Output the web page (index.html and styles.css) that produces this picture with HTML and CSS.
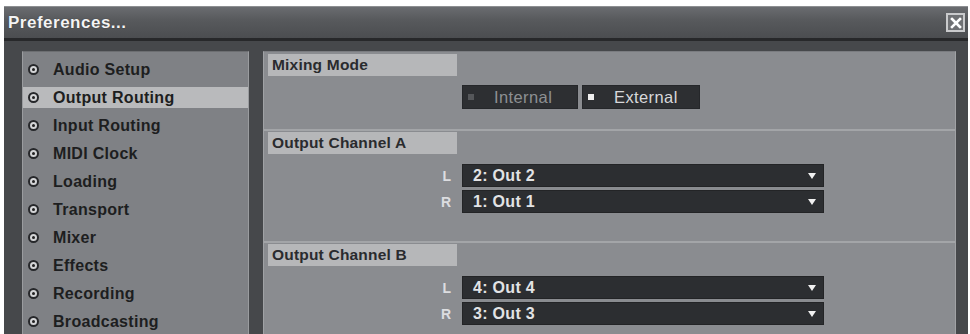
FILE: index.html
```html
<!DOCTYPE html>
<html>
<head>
<meta charset="utf-8">
<link rel="stylesheet" href="styles.css">
</head>
<body>
<div class="window">
  <div class="titlebar">
    <span class="title">Preferences...</span>
    <span class="close">
      <svg width="14" height="14" viewBox="0 0 14 14"><path d="M3 3 L11 11 M11 3 L3 11" stroke="#ffffff" stroke-width="2.6" stroke-linecap="square"/></svg>
    </span>
  </div>
  <div class="frame">
    <ul class="sidebar">
      <li class="item"><span class="radio"></span>Audio Setup</li>
      <li class="item active"><span class="radio"></span>Output Routing</li>
      <li class="item"><span class="radio"></span>Input Routing</li>
      <li class="item"><span class="radio"></span>MIDI Clock</li>
      <li class="item"><span class="radio"></span>Loading</li>
      <li class="item"><span class="radio"></span>Transport</li>
      <li class="item"><span class="radio"></span>Mixer</li>
      <li class="item"><span class="radio"></span>Effects</li>
      <li class="item"><span class="radio"></span>Recording</li>
      <li class="item"><span class="radio"></span>Broadcasting</li>
    </ul>
    <div class="main">
      <section class="section mixing">
        <div class="head">Mixing Mode</div>
        <div class="toggles">
          <div class="toggle off"><i class="led"></i>Internal</div>
          <div class="toggle on"><i class="led"></i>External</div>
        </div>
      </section>
      <section class="section channel">
        <div class="head">Output Channel A</div>
        <div class="rows">
          <div class="row"><span class="ch">L</span><div class="select">2: Out 2<i class="arrow"></i></div></div>
          <div class="row"><span class="ch">R</span><div class="select">1: Out 1<i class="arrow"></i></div></div>
        </div>
      </section>
      <section class="section channel">
        <div class="head">Output Channel B</div>
        <div class="rows">
          <div class="row"><span class="ch">L</span><div class="select">4: Out 4<i class="arrow"></i></div></div>
          <div class="row"><span class="ch">R</span><div class="select">3: Out 3<i class="arrow"></i></div></div>
        </div>
      </section>
    </div>
  </div>
</div>
</body>
</html>
```
FILE: styles.css
```css
html, body {
  margin: 0;
  padding: 0;
  background: #ffffff;
  overflow: hidden;
  height: 334px;
}
body {
  font-family: "Liberation Sans", Arial, sans-serif;
}
.window {
  margin: 6px 0 0 4px;
  width: 964px;
  height: 340px;
  background: #46484b;
  display: flex;
  flex-direction: column;
}
.titlebar {
  height: 32px;
  flex: none;
  box-sizing: border-box;
  border-top: 1px solid #8d8f92;
  background: linear-gradient(#6a6c70, #585a5d 40%, #4b4d50);
  display: flex;
  align-items: center;
  justify-content: space-between;
  padding: 0 3px 0 4px;
}
.title {
  color: #f4f4f4;
  font-weight: bold;
  font-size: 17px;
  letter-spacing: 0.5px;
  text-shadow: 0 0 1px rgba(0,0,0,0.5);
  margin-top: 1px;
}
.close {
  width: 19px;
  height: 19px;
  box-sizing: border-box;
  border: 2px solid #c9cacc;
  background: #6f7174;
  display: flex;
  align-items: center;
  justify-content: center;
}
.close svg { display: block; }
.frame {
  flex: 1;
  border-top: 3px solid #27282a;
  padding: 10px 12px 0 18px;
  display: flex;
  gap: 14px;
  align-items: flex-start;
}
.sidebar {
  list-style: none;
  margin: 0;
  padding: 7px 0 0 0;
  width: 227px;
  height: 300px;
  box-sizing: border-box;
  background: #7f8185;
  border: 1px solid #9a9c9f;
  border-top-color: #6c6e71;
}
.item {
  height: 21px;
  margin-bottom: 7px;
  display: flex;
  align-items: center;
  font-weight: bold;
  font-size: 16px;
  letter-spacing: 0.3px;
  color: #1d1e20;
}
.item.active {
  background: #b9babc;
}
.radio {
  width: 11px;
  height: 11px;
  box-sizing: border-box;
  border: 2px solid #26272a;
  border-radius: 50%;
  background: #d4d5d7;
  margin: 0 14px 0 5px;
  display: flex;
  align-items: center;
  justify-content: center;
}
.radio::after {
  content: "";
  width: 3px;
  height: 3px;
  border-radius: 50%;
  background: #222;
}
.main {
  flex: 1;
  height: 300px;
  box-sizing: border-box;
  background: #8a8c90;
  border: 1px solid #a0a2a5;
  border-top-color: #7a7c80;
}
.section {
  border-top: 2px solid #a3a5a8;
  padding-top: 1px;
}
.section.mixing {
  border-top: 0;
  padding-top: 2px;
  padding-bottom: 20px;
}
.section.channel {
  padding-bottom: 28px;
}
.head {
  width: 189px;
  height: 22px;
  box-sizing: border-box;
  margin-left: 4px;
  padding-left: 4px;
  background: #b6b7b9;
  line-height: 22px;
  font-weight: bold;
  font-size: 15.5px;
  letter-spacing: 0.2px;
  color: #2a2b2e;
}
.toggles {
  display: flex;
  gap: 4px;
  margin: 9px 0 0 198px;
}
.toggle {
  height: 24px;
  box-sizing: border-box;
  background: #2d2f32;
  border: 1px solid #25272a;
  display: flex;
  align-items: center;
  font-size: 16.5px;
  letter-spacing: 0.4px;
}
.toggle.off {
  width: 116px;
  color: #8e9093;
}
.toggle.on {
  width: 118px;
  color: #d7d8da;
}
.led {
  width: 6px;
  height: 6px;
  margin: 0 20px 0 5px;
}
.toggle.off .led { background: #55575a; }
.toggle.on .led { background: #eeeeee; }
.rows {
  margin-top: 10px;
  display: flex;
  flex-direction: column;
  gap: 3px;
}
.row {
  display: flex;
  align-items: center;
}
.ch {
  width: 198px;
  box-sizing: border-box;
  padding-right: 11px;
  text-align: right;
  color: #dcdde0;
  font-weight: bold;
  font-size: 14px;
}
.select {
  position: relative;
  width: 362px;
  height: 23px;
  box-sizing: border-box;
  background: #2c2e31;
  border: 1px solid #232426;
  padding-left: 10px;
  line-height: 21px;
  color: #e2e3e5;
  font-weight: bold;
  font-size: 16px;
  letter-spacing: 0.3px;
}
.arrow {
  position: absolute;
  right: 7px;
  top: 8px;
  width: 0;
  height: 0;
  border-left: 4.5px solid transparent;
  border-right: 4.5px solid transparent;
  border-top: 6px solid #f0f0f0;
}
```
